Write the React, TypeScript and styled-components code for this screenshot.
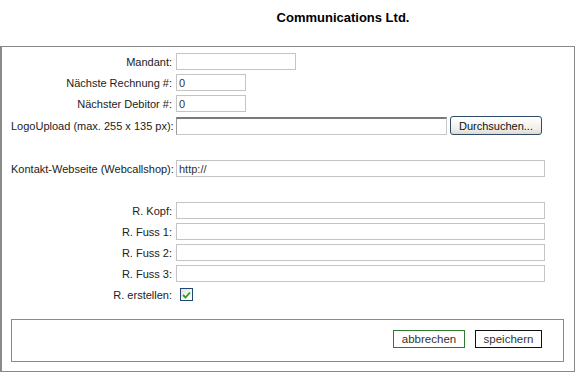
import { createGlobalStyle } from 'styled-components'
import styled from 'styled-components'

const GlobalStyle = createGlobalStyle`
  html, body {
    margin: 0;
    padding: 0;
    background: #fff;
  }
  body {
    font-family: 'Liberation Sans', Arial, sans-serif;
    font-size: 11px;
    color: #222;
  }
`

type Field = {
  label: string
  kind: 'text' | 'file' | 'check' | 'blank'
  width?: number
  value?: string
}

const fields: Field[] = [
  { label: 'Mandant:', kind: 'text', width: 120 },
  { label: 'Nächste Rechnung #:', kind: 'text', width: 70, value: '0' },
  { label: 'Nächster Debitor #:', kind: 'text', width: 70, value: '0' },
  { label: 'LogoUpload (max. 255 x 135 px):', kind: 'file' },
  { label: '', kind: 'blank' },
  { label: 'Kontakt-Webseite (Webcallshop):', kind: 'text', value: 'http://' },
  { label: '', kind: 'blank' },
  { label: 'R. Kopf:', kind: 'text' },
  { label: 'R. Fuss 1:', kind: 'text' },
  { label: 'R. Fuss 2:', kind: 'text' },
  { label: 'R. Fuss 3:', kind: 'text' },
  { label: 'R. erstellen:', kind: 'check' },
]

export default function App() {
  return (
    <Page>
      <GlobalStyle />
      <Header>
        <Title>Communications Ltd.</Title>
      </Header>
      <Panel>
        <Form>
          {fields.map((f, i) => (
            <Row key={i} $tall={f.kind === 'file'}>
              <Label>{f.label}</Label>
              <Cell>
                {f.kind === 'text' && <TextBox $w={f.width}>{f.value}</TextBox>}
                {f.kind === 'file' && (
                  <>
                    <FileBox />
                    <BrowseButton>Durchsuchen...</BrowseButton>
                  </>
                )}
                {f.kind === 'check' && (
                  <CheckBox>
                    <svg width="9" height="8" viewBox="0 0 9 8">
                      <path d="M1 4 L3.5 6.5 L8 1.5" fill="none" stroke="#21a121" strokeWidth="1.8" />
                    </svg>
                  </CheckBox>
                )}
              </Cell>
            </Row>
          ))}
        </Form>
        <Footer>
          <ActionButton $variant="cancel">abbrechen</ActionButton>
          <ActionButton $variant="save">speichern</ActionButton>
        </Footer>
      </Panel>
    </Page>
  )
}

const Page = styled.div`
  width: 577px;
`

const Header = styled.div`
  display: flex;
  justify-content: center;
  height: 46px;
  padding-left: 109px;
  padding-top: 10px;
  box-sizing: border-box;
`

const Title = styled.div`
  font-weight: bold;
  font-size: 13px;
  color: #000;
`

const Panel = styled.div`
  width: 575px;
  height: 326px;
  box-sizing: border-box;
  border: 1px solid #8a8a8a;
  border-left-width: 2px;
  padding: 4px 10px 9px 9px;
  display: flex;
  flex-direction: column;
`

const Form = styled.div`
  display: flex;
  flex-direction: column;
`

const Row = styled.div<{ $tall?: boolean }>`
  display: grid;
  grid-template-columns: 161px 1fr;
  column-gap: 4px;
  align-items: center;
  height: ${(p) => (p.$tall ? 23 : 21)}px;
`

const Label = styled.div`
  text-align: right;
  white-space: nowrap;
  color: #222;
`

const Cell = styled.div`
  display: flex;
  align-items: center;
  gap: 3px;
`

const TextBox = styled.div<{ $w?: number }>`
  width: ${(p) => (p.$w ? `${p.$w}px` : '369px')};
  height: 17px;
  box-sizing: border-box;
  border: 1px solid #c4c4c4;
  padding: 2px 2px 0;
  line-height: 13px;
  color: #333;
  background: #fff;
`

const FileBox = styled.div`
  width: 271px;
  height: 18px;
  box-sizing: border-box;
  border: 1px solid #c8c8c8;
  border-top: 2px solid #7a7a7a;
  border-left: 1px solid #9a9a9a;
  background: #fff;
`

const BrowseButton = styled.div`
  width: 92px;
  height: 19px;
  box-sizing: border-box;
  border: 1px solid #2f4a6a;
  border-radius: 3px;
  background: linear-gradient(#ffffff, #f0efe8 70%, #dcdad0);
  display: flex;
  align-items: center;
  justify-content: center;
  color: #111;
`

const CheckBox = styled.div`
  width: 13px;
  height: 13px;
  margin-left: 4px;
  box-sizing: border-box;
  border: 1px solid #1f4a6e;
  background: linear-gradient(135deg, #e4e4dc, #ffffff);
  display: flex;
  align-items: center;
  justify-content: center;
`

const Footer = styled.div`
  margin-top: auto;
  height: 43px;
  box-sizing: border-box;
  border: 1px solid #8a8a8a;
  display: flex;
  justify-content: flex-end;
  align-items: flex-start;
  gap: 10px;
  padding: 10px 21px 0 0;
`

const ActionButton = styled.div<{ $variant: 'cancel' | 'save' }>`
  height: 18px;
  box-sizing: border-box;
  padding: 0 8px;
  width: ${(p) => (p.$variant === 'cancel' ? 72 : 67)}px;
  border: 1px solid ${(p) => (p.$variant === 'cancel' ? '#2f7a2f' : '#111')};
  display: flex;
  align-items: center;
  justify-content: center;
  color: #333;
  font-size: 11.5px;
  background: #fff;
`
